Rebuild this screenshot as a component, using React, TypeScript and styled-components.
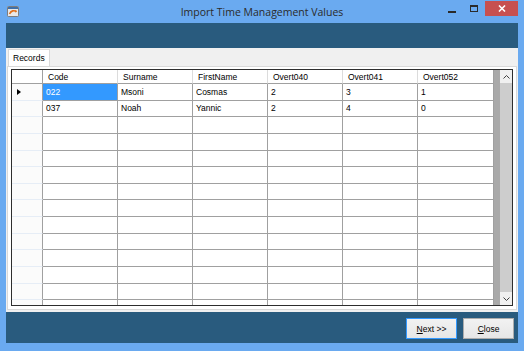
import styled, { createGlobalStyle } from "styled-components";

const GlobalStyle = createGlobalStyle`
  html, body {
    margin: 0;
    padding: 0;
  }
  body {
    width: 524px;
    height: 351px;
    overflow: hidden;
    font-family: "Liberation Sans", Arial, sans-serif;
  }
`;

const columns = ["Code", "Surname", "FirstName", "Overt040", "Overt041", "Overt052"];

const records = [
  ["022", "Msoni", "Cosmas", "2", "3", "1"],
  ["037", "Noah", "Yannic", "2", "4", "0"],
];

const EMPTY_ROWS = 12;

export default function App() {
  const rows = [...records, ...Array.from({ length: EMPTY_ROWS }, () => columns.map(() => ""))];

  return (
    <>
      <GlobalStyle />
      <Window>
        <TitleBar>
          <AppIcon viewBox="0 0 12 12">
            <rect x="0.5" y="1.5" width="11" height="10" rx="1" fill="#e8e8e8" stroke="#7d7d7d" />
            <rect x="1" y="2" width="10" height="2" fill="#3f6fa8" />
            <path d="M2.5 9 C4 5.5 7 5 9.5 6.5" stroke="#e0701c" strokeWidth="1.6" fill="none" />
            <path d="M8.5 5 L10 6.7 L8 7.6 Z" fill="#e0701c" />
          </AppIcon>
          <Title>Import Time Management Values</Title>
          <Controls>
            <ControlSlot>
              <MinGlyph />
            </ControlSlot>
            <ControlSlot>
              <MaxGlyph />
            </ControlSlot>
            <CloseButton>
              <svg width="8" height="7" viewBox="0 0 8 7">
                <path d="M1 0.5 L7 6.5 M7 0.5 L1 6.5" stroke="#fff" strokeWidth="1.6" />
              </svg>
            </CloseButton>
          </Controls>
        </TitleBar>

        <Client>
          <TopPanel />
          <TabControl>
            <TabStrip>
              <Tab>Records</Tab>
            </TabStrip>
            <TabPage>
              <GridView>
                <GridBody>
                  <HeaderRow>
                    <CornerCell />
                    {columns.map((c) => (
                      <HeaderCell key={c}>{c}</HeaderCell>
                    ))}
                  </HeaderRow>
                  {rows.map((r, i) => (
                    <Row key={i}>
                      <RowHeader>{i === 0 && <CurrentArrow />}</RowHeader>
                      {r.map((v, j) => (
                        <Cell key={j} $selected={i === 0 && j === 0}>
                          {v}
                        </Cell>
                      ))}
                    </Row>
                  ))}
                </GridBody>
                <ScrollBar>
                  <ScrollArrow>
                    <svg width="7" height="4" viewBox="0 0 7 4">
                      <path d="M0.5 3.5 L3.5 0.5 L6.5 3.5" stroke="#404040" fill="none" />
                    </svg>
                  </ScrollArrow>
                  <Thumb />
                  <ScrollArrow>
                    <svg width="7" height="4" viewBox="0 0 7 4">
                      <path d="M0.5 0.5 L3.5 3.5 L6.5 0.5" stroke="#404040" fill="none" />
                    </svg>
                  </ScrollArrow>
                </ScrollBar>
              </GridView>
            </TabPage>
          </TabControl>
          <BottomPanel>
            <Button $default>
              <u>N</u>ext &gt;&gt;
            </Button>
            <Button>
              <u>C</u>lose
            </Button>
          </BottomPanel>
        </Client>
      </Window>
    </>
  );
}

const Window = styled.div`
  width: 524px;
  height: 351px;
  box-sizing: border-box;
  background: #6aaaf0;
  padding: 0 6px 8px 6px;
  display: flex;
  flex-direction: column;
`;

const TitleBar = styled.div`
  height: 23px;
  flex-shrink: 0;
  display: grid;
  grid-template-columns: 1fr auto 1fr;
  align-items: start;
`;

const AppIcon = styled.svg`
  width: 12px;
  height: 12px;
  margin: 5px 0 0 1px;
`;

const Title = styled.div`
  align-self: center;
  font-family: "Open Sans", "Liberation Sans", sans-serif;
  font-size: 10.5px;
  color: #2b2b2b;
  white-space: nowrap;
  margin-top: 1px;
`;

const Controls = styled.div`
  justify-self: end;
  display: flex;
  align-items: flex-start;
`;

const ControlSlot = styled.div`
  width: 22px;
  height: 16px;
  margin-top: 1px;
  display: flex;
  align-items: center;
  justify-content: center;
`;

const MinGlyph = styled.div`
  width: 8px;
  height: 2px;
  background: #2a2a2a;
  margin-top: 6px;
`;

const MaxGlyph = styled.div`
  width: 8px;
  height: 7px;
  box-sizing: border-box;
  border: 1px solid #2a2a2a;
  border-top-width: 2px;
  margin-top: -2px;
`;

const CloseButton = styled.div`
  width: 33px;
  height: 15px;
  margin-top: 1px;
  background: #c75050;
  display: flex;
  align-items: center;
  justify-content: center;
`;

const Client = styled.div`
  flex: 1;
  background: #295b7e;
  display: flex;
  flex-direction: column;
  min-height: 0;
`;

const TopPanel = styled.div`
  height: 25px;
  flex-shrink: 0;
`;

const TabControl = styled.div`
  flex: 1;
  min-height: 0;
  background: #f0f0f0;
  padding-top: 1px;
  display: flex;
  flex-direction: column;
`;

const TabStrip = styled.div`
  height: 17px;
  flex-shrink: 0;
  padding-left: 2px;
  display: flex;
`;

const Tab = styled.div`
  height: 17px;
  box-sizing: border-box;
  background: #fff;
  border: 1px solid #d9d9d9;
  border-bottom: none;
  padding: 0 4px;
  font-size: 8.5px;
  line-height: 16px;
  color: #000;
  position: relative;
  z-index: 1;
  margin-bottom: -1px;
`;

const TabPage = styled.div`
  flex: 1;
  min-height: 0;
  margin: 0 1px 2px 1px;
  border: 1px solid #d9d9d9;
  background: #fff;
  padding: 2px 3px 3px 3px;
  display: flex;
`;

const GridView = styled.div`
  flex: 1;
  min-height: 0;
  border: 1px solid #2e2e2e;
  display: flex;
  overflow: hidden;
  background: #fff;
`;

const GridBody = styled.div`
  flex: 1;
  min-height: 0;
  overflow: hidden;
  display: flex;
  flex-direction: column;
`;

const Row = styled.div`
  display: grid;
  grid-template-columns: 31px repeat(5, 75px) 76px;
  height: 16.65px;
  flex-shrink: 0;
  font-size: 8.5px;
`;

const HeaderRow = styled(Row)`
  height: 14px;
`;

const Cell = styled.div<{ $selected?: boolean }>`
  box-sizing: border-box;
  border-right: 1px solid #a0a0a0;
  border-bottom: 1px solid #a0a0a0;
  padding-left: 3px;
  display: flex;
  align-items: center;
  background: ${(p) => (p.$selected ? "#3399ff" : "#fff")};
  color: ${(p) => (p.$selected ? "#fff" : "#000")};
  white-space: nowrap;
  overflow: hidden;
`;

const HeaderCell = styled.div`
  box-sizing: border-box;
  border-right: 1px solid #dcdcdc;
  border-bottom: 1px solid #a0a0a0;
  padding-left: 5px;
  display: flex;
  align-items: center;
  background: #fff;
  color: #000;
  white-space: nowrap;
  &:last-child {
    border-right-color: #a0a0a0;
  }
`;

const CornerCell = styled.div`
  box-sizing: border-box;
  border-right: 1px solid #a0a0a0;
  border-bottom: 1px solid #a0a0a0;
  background: #fff;
`;

const RowHeader = styled.div`
  box-sizing: border-box;
  border-right: 1px solid #a0a0a0;
  border-bottom: 1px solid #e6edf6;
  background: #fbfbfb;
  display: flex;
  align-items: center;
  padding-left: 5px;
`;

const CurrentArrow = styled.div`
  width: 0;
  height: 0;
  border-top: 3.5px solid transparent;
  border-bottom: 3.5px solid transparent;
  border-left: 4px solid #000;
`;

const ScrollBar = styled.div`
  width: 18px;
  flex-shrink: 0;
  background: #f0f0f0;
  border-left: 6px solid #a9a9a9;
  box-sizing: border-box;
  display: flex;
  flex-direction: column;
`;

const ScrollArrow = styled.div`
  height: 13px;
  flex-shrink: 0;
  display: flex;
  align-items: center;
  justify-content: center;
`;

const Thumb = styled.div`
  flex: 1;
  background: #cdcdcd;
`;

const BottomPanel = styled.div`
  height: 31px;
  flex-shrink: 0;
  display: flex;
  justify-content: flex-end;
  align-items: flex-start;
  gap: 6px;
  padding: 6px 4px 0 0;
  box-sizing: border-box;
`;

const Button = styled.div<{ $default?: boolean }>`
  width: 51px;
  height: 21px;
  box-sizing: border-box;
  border: 1px solid ${(p) => (p.$default ? "#3399ff" : "#acacac")};
  background: linear-gradient(#f2f2f2, #e6e6e6);
  font-size: 8.5px;
  color: #000;
  display: flex;
  align-items: center;
  justify-content: center;
`;
